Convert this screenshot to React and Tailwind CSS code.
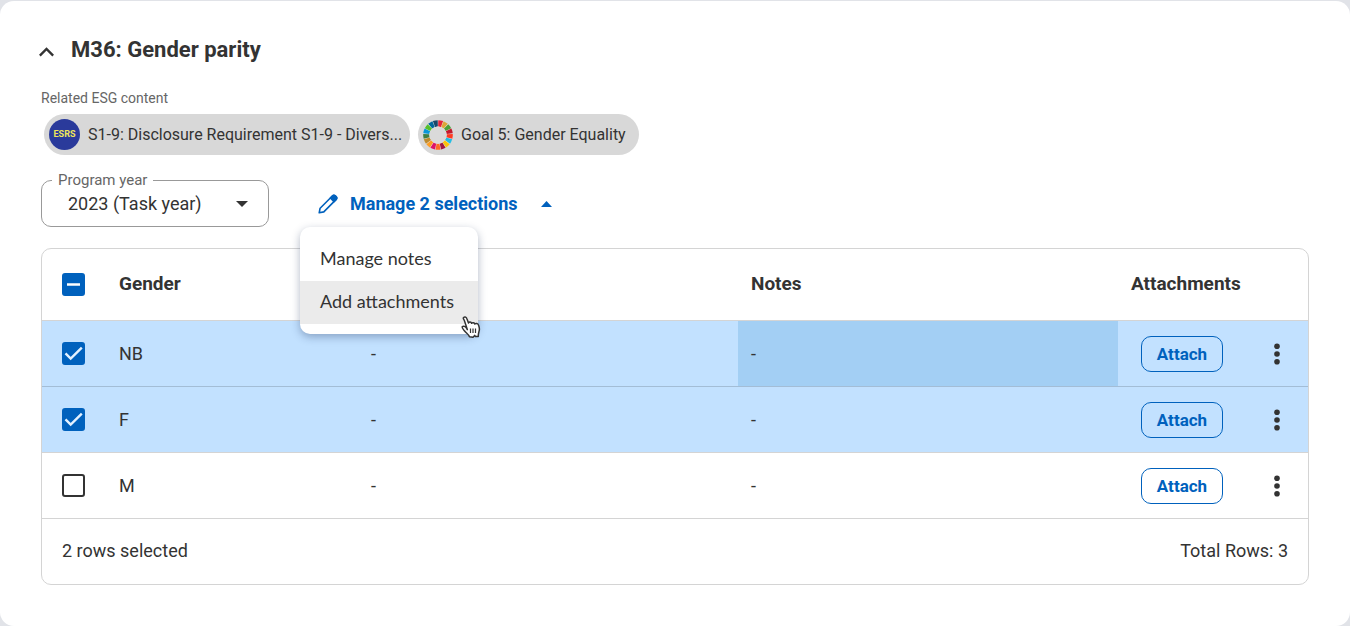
import { useEffect, useRef, useState } from 'react'

const GOAL_COLORS = [
  '#E5243B', '#DDA63A', '#4C9F38', '#C5192D', '#FF3A21', '#26BDE2',
  '#FCC30B', '#A21942', '#FD6925', '#DD1367', '#FD9D24', '#BF8B2E',
  '#3F7E44', '#0A97D9', '#56C02B', '#00689D', '#19486A',
]

const ROWS = [
  { id: 'nb', gender: 'NB', value: '-', notes: '-' },
  { id: 'f', gender: 'F', value: '-', notes: '-' },
  { id: 'm', gender: 'M', value: '-', notes: '-' },
]

function point(r, deg) {
  const a = (deg * Math.PI) / 180
  return `${(20 + r * Math.sin(a)).toFixed(2)} ${(20 - r * Math.cos(a)).toFixed(2)}`
}

function GoalWheel() {
  const step = 360 / GOAL_COLORS.length
  return (
    <svg viewBox="0 0 40 40" className="size-[30px] shrink-0" aria-hidden="true">
      <circle cx="20" cy="20" r="19.5" fill="#e6e6e6" />
      {GOAL_COLORS.map((color, i) => {
        const from = i * step + 1
        const to = (i + 1) * step - 1
        return (
          <path
            key={color}
            fill={color}
            d={`M${point(19.8, from)} A19.8 19.8 0 0 1 ${point(19.8, to)} L${point(11.5, to)} A11.5 11.5 0 0 0 ${point(11.5, from)} Z`}
          />
        )
      })}
      <circle cx="20" cy="20" r="11.5" fill="#dadada" />
    </svg>
  )
}

function Checkbox({ checked, indeterminate = false, label, onChange }) {
  const ref = useRef(null)

  useEffect(() => {
    ref.current.indeterminate = indeterminate
  }, [indeterminate])

  const filled = checked || indeterminate

  return (
    <span className="relative block size-[23px]">
      <input
        ref={ref}
        type="checkbox"
        aria-label={label}
        checked={checked}
        onChange={onChange}
        className={`block size-[23px] appearance-none rounded-[3px] border-2 ${
          filled ? 'border-[#0061bd] bg-[#0061bd]' : 'border-[#333] bg-white'
        }`}
      />
      {filled && (
        <svg viewBox="0 0 23 23" className="pointer-events-none absolute inset-0" fill="none" stroke="#fff" strokeWidth="2.4">
          {indeterminate ? <path d="M5 11.5h13" /> : <path d="M3.5 11.3l5.2 5.2L19.8 5.6" stroke="#e3f1ff" />}
        </svg>
      )}
    </span>
  )
}

function Chip({ icon, children }) {
  return (
    <li className="flex h-[41px] max-w-[366px] items-center gap-2 whitespace-nowrap rounded-full bg-[#d8d8d8] pl-[5px] pr-[13px] text-base">
      {icon}
      {children}
    </li>
  )
}

function HandCursor() {
  return (
    <svg viewBox="0 0 20 22" className="pointer-events-none absolute -right-[3px] top-[89px] w-5" aria-hidden="true">
      <path
        d="M6.3 13.6 L3.6 5.2 C3 3.2 1.6 2.6 2.6 1.5 C4 .3 5.5 1.3 6 3 L7.5 7 C8 5.7 10.2 5.8 10.6 7.3 C11.4 6.3 13.4 6.5 13.8 8 C14.8 7.1 17 7.4 17.5 9 C18.2 10.8 18.8 12.5 18.2 14.7 C17.8 16.5 17.2 17.3 17.3 20.6 L14.5 20.6 L13.7 19.4 L12 21.2 L8.5 20.8 C7.3 18 5 17 3.4 14.8 C2.1 13 .4 11.5 1.4 10.6 C2.6 9.5 4.3 10.7 5.6 12.2 Z"
        fill="#fff"
        stroke="#333"
        strokeWidth="1.5"
        strokeLinejoin="round"
      />
      <path d="M9.5 12.5v4.5M12 12.5v4.5M14.5 12.5v4.5" stroke="#333" strokeWidth="1.2" />
    </svg>
  )
}

function ManageMenu({ count }) {
  const [open, setOpen] = useState(true)

  return (
    <div className="relative">
      <button
        type="button"
        aria-expanded={open}
        onClick={() => setOpen(o => !o)}
        className="flex h-[47px] w-[234px] items-center text-lg font-bold text-[#0061bd]"
      >
        <svg viewBox="0 0 20 20" className="mr-3 size-5" fill="none" stroke="currentColor" strokeWidth="1.6" strokeLinejoin="round">
          <path d="M1.2 18.8l.9-4.6L14.6 1.8a1.8 1.8 0 0 1 2.6 0l1 1a1.8 1.8 0 0 1 0 2.6L5.8 17.9z" />
          <path d="M12.4 4l2.2-2.2a1.8 1.8 0 0 1 2.6 0l1 1a1.8 1.8 0 0 1 0 2.6L16 7.6z" fill="currentColor" />
        </svg>
        Manage {count} selections
        <svg viewBox="0 0 11 6" className="ml-auto w-[11px]" fill="currentColor">
          <path d="M5.5 0L11 6H0z" />
        </svg>
      </button>
      {open && (
        <div
          role="menu"
          className="absolute -left-[18px] top-[47px] z-10 w-[178px] rounded-[10px] bg-white pb-[10px] pt-[11px] font-['Lato',sans-serif] text-lg shadow-[0_3px_9px_rgba(30,50,90,0.35)]"
        >
          <button role="menuitem" type="button" className="block h-[43px] w-full px-5 pb-[3px] text-left">
            Manage notes
          </button>
          <button role="menuitem" type="button" className="block h-[43px] w-full bg-[#ebebeb] px-5 pb-[3px] text-left">
            Add attachments
          </button>
          <HandCursor />
        </div>
      )}
    </div>
  )
}

export default function App() {
  const [selected, setSelected] = useState(['nb', 'f'])
  const [expanded, setExpanded] = useState(true)

  const toggle = id =>
    setSelected(prev => (prev.includes(id) ? prev.filter(s => s !== id) : [...prev, id]))

  const allSelected = selected.length === ROWS.length
  const toggleAll = () => setSelected(allSelected ? [] : ROWS.map(r => r.id))

  return (
    <div className="min-h-screen bg-[#e1e3e8] pt-px font-['Roboto',sans-serif] text-[#333]">
      <main className="rounded-[14px] bg-white px-[41px] pb-[41px] pt-[35px]">
        <h2 className="text-[22px] font-bold leading-7">
          <button type="button" aria-expanded={expanded} onClick={() => setExpanded(e => !e)} className="flex items-center">
            <svg viewBox="0 0 14 9" className="ml-[-2px] mr-[17px] mt-1 w-[15px]" fill="none" stroke="currentColor" strokeWidth="2.2">
              <path d="M.8 8L7 1.8 13.2 8" />
            </svg>
            M36: Gender parity
          </button>
        </h2>

        {expanded && (
          <>
            {/* Related content chips */}
            <p className="mt-6 text-sm leading-5 text-[#666]">Related ESG content</p>
            <ul className="ml-[3px] mt-[6px] flex gap-2">
              <Chip
                icon={
                  <span className="flex size-[31px] shrink-0 items-center justify-center rounded-full bg-[#2a3a9b] text-[9px] font-bold text-[#efe65a]">
                    ESRS
                  </span>
                }
              >
                S1-9: Disclosure Requirement S1-9 - Divers...
              </Chip>
              <Chip icon={<GoalWheel />}>Goal 5: Gender Equality</Chip>
            </ul>

            {/* Year picker and bulk actions */}
            <div className="mt-[15px] flex items-end gap-[49px]">
              <fieldset className="relative h-[57px] w-[228px] rounded-[10px] border border-[#999] pl-[10px]">
                <legend className="px-[6px] text-[15px] leading-5 text-[#666]">
                  <label htmlFor="program-year">Program year</label>
                </legend>
                <select
                  id="program-year"
                  defaultValue="2023"
                  className="block h-[28px] w-full appearance-none bg-transparent pl-4 text-lg outline-none"
                >
                  <option value="2023">2023 (Task year)</option>
                  <option value="2022">2022</option>
                </select>
                <svg viewBox="0 0 12 6" className="pointer-events-none absolute bottom-[19px] right-5 w-3" fill="#333">
                  <path d="M0 0h12L6 6z" />
                </svg>
              </fieldset>
              <ManageMenu count={selected.length} />
            </div>

            {/* Data table */}
            <div className="mt-[21px] overflow-hidden rounded-[10px] border border-[#d4d4d4] text-lg">
              <table className="w-full table-fixed border-collapse text-left">
                <colgroup>
                  <col className="w-16" />
                  <col className="w-[252px]" />
                  <col />
                  <col />
                  <col className="w-32" />
                  <col className="w-[62px]" />
                </colgroup>
                <thead className="text-[19px]">
                  <tr className="h-[71px] border-b border-[#d4d4d4]">
                    <th className="pl-5">
                      <Checkbox
                        label="Select all rows"
                        checked={allSelected}
                        indeterminate={selected.length > 0 && !allSelected}
                        onChange={toggleAll}
                      />
                    </th>
                    <th className="px-[13px]">Gender</th>
                    <th />
                    <th className="px-[13px]">Notes</th>
                    <th className="px-[13px]" colSpan={2}>Attachments</th>
                  </tr>
                </thead>
                <tbody>
                  {ROWS.map(row => {
                    const isSelected = selected.includes(row.id)
                    return (
                      <tr
                        key={row.id}
                        className={`h-[66px] border-b ${isSelected ? 'bg-[#c2e1ff]' : 'bg-white'} ${
                          row.id === 'nb' ? 'border-[#a3bdd6]' : 'border-[#d4d4d4]'
                        }`}
                      >
                        <td className="pl-5">
                          <Checkbox label={`Select ${row.gender}`} checked={isSelected} onChange={() => toggle(row.id)} />
                        </td>
                        <td className="px-[13px] pt-[2px]">{row.gender}</td>
                        <td className="px-[13px] pt-[2px]">{row.value}</td>
                        <td className={`px-[13px] pt-[2px] ${row.id === 'nb' ? 'bg-[#a3cff4]' : ''}`}>{row.notes}</td>
                        <td className="pt-[2px] text-center">
                          <button
                            type="button"
                            className="h-9 w-[82px] rounded-[10px] border border-[#0061bd] align-middle text-[17px] font-bold text-[#0061bd]"
                          >
                            Attach
                          </button>
                        </td>
                        <td className="pt-[2px] text-center">
                          <button type="button" aria-label={`More actions for ${row.gender}`} className="block px-7">
                            <svg viewBox="0 0 6 22" className="h-[22px] w-[6px]" fill="#333">
                              <circle cx="3" cy="3.2" r="2.8" />
                              <circle cx="3" cy="11" r="2.8" />
                              <circle cx="3" cy="18.8" r="2.8" />
                            </svg>
                          </button>
                        </td>
                      </tr>
                    )
                  })}
                </tbody>
              </table>
              <div className="flex h-[65px] items-center justify-between px-5">
                <span>{selected.length} rows selected</span>
                <span>Total Rows: {ROWS.length}</span>
              </div>
            </div>
          </>
        )}
      </main>
    </div>
  )
}
